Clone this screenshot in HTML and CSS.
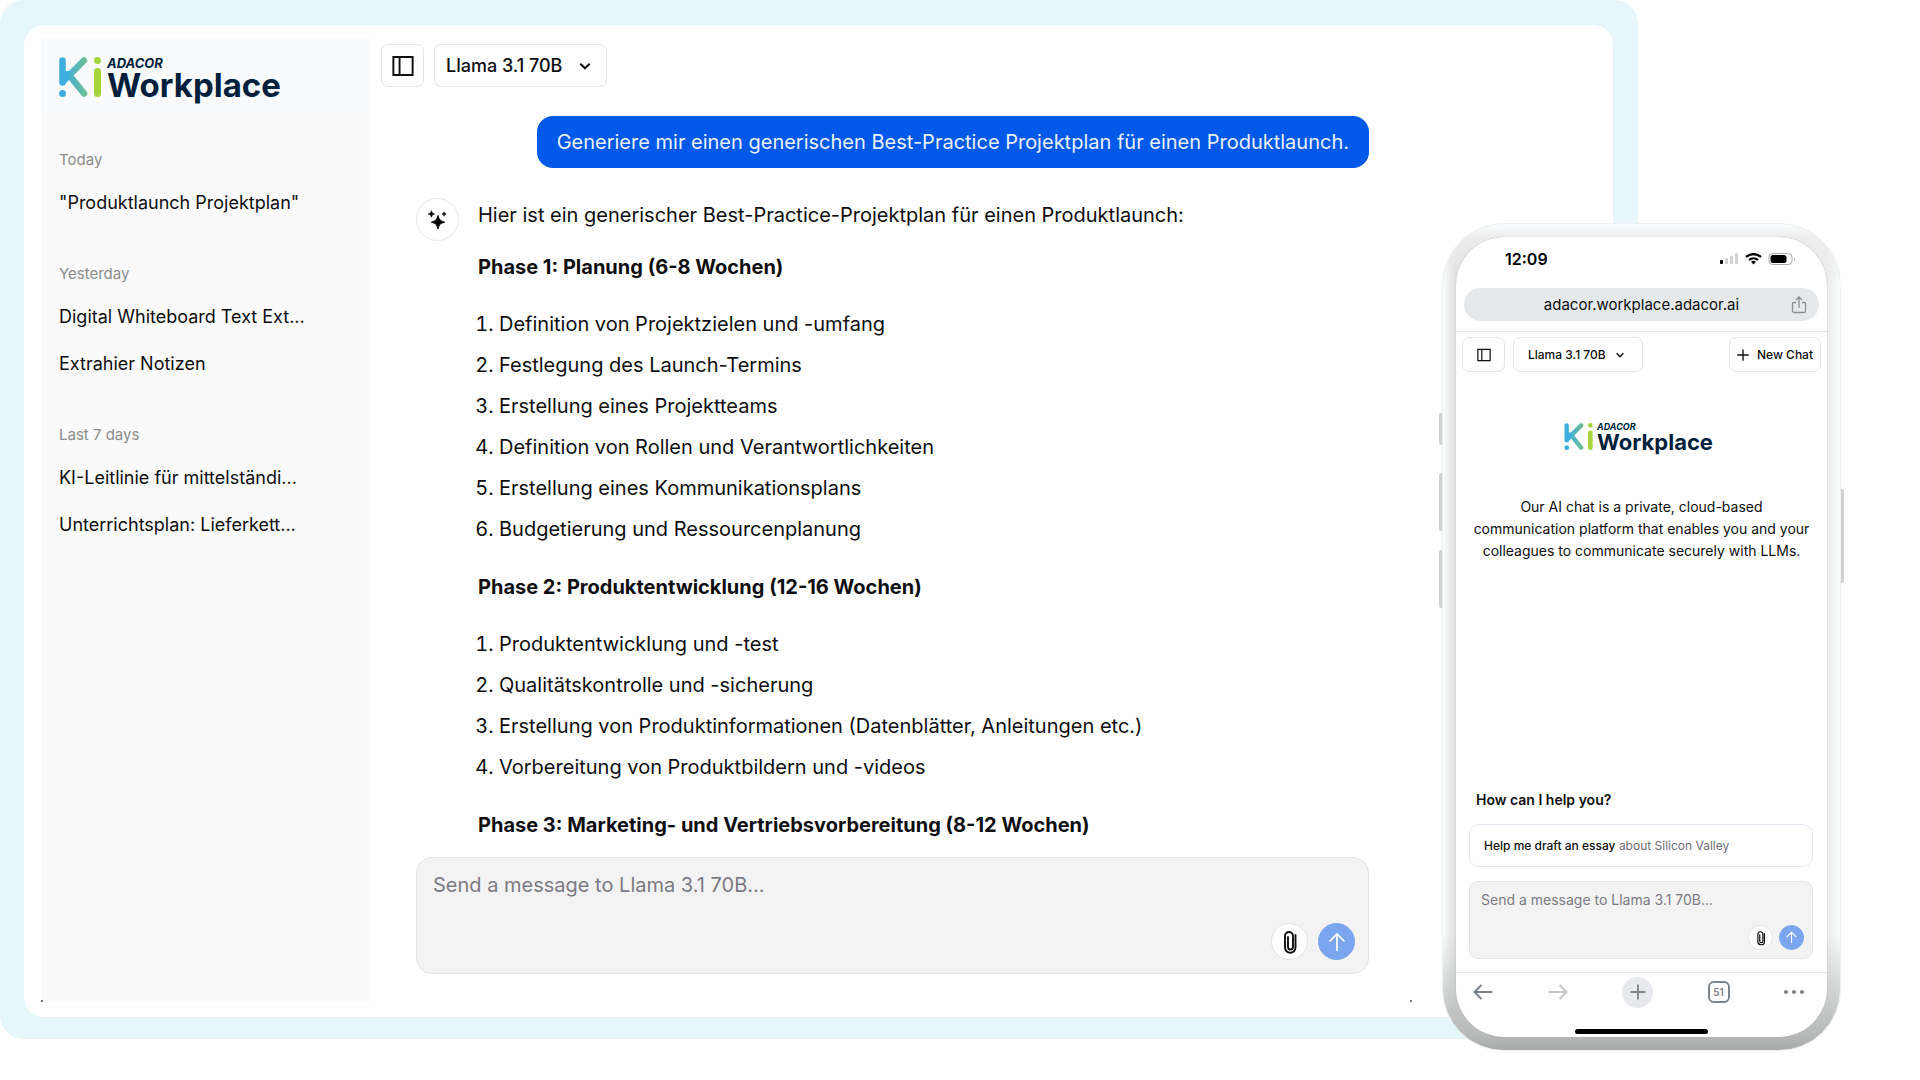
FILE: index.html
```html
<!DOCTYPE html>
<html lang="de">
<head>
    <meta charset="UTF-8">
    <meta name="viewport" content="width=device-width, initial-scale=1.0">
    <title>Adacor KI Workplace</title>
    <link rel="stylesheet" href="styles.css">
</head>
<body>
    <!-- shared icons -->
    <svg class="sprite" aria-hidden="true">
        <defs>
            <linearGradient id="kiBlue" gradientUnits="userSpaceOnUse" x1="0" y1="0" x2="30" y2="0">
                <stop offset="0.2" stop-color="#3eaee0"/>
                <stop offset="1" stop-color="#74c28a"/>
            </linearGradient>
        </defs>
        <symbol id="ki" viewBox="0 0 42 40">
            <g fill="none" stroke="url(#kiBlue)" stroke-width="6.500" stroke-linecap="round" stroke-linejoin="round">
                <path d="M3.500 3.500V25.500M3.500 25L25 3.500M11 19L25 36.500"/>
            </g>
            <path d="M3 14h7v8l-5 6h-2z" fill="#3eaee0"/>
            <circle cx="3.500" cy="36.500" r="3.500" fill="#3eaee0"/>
            <circle cx="38.500" cy="3.500" r="3.500" fill="#a5d43c"/>
            <rect x="35" y="11" width="7" height="29" rx="3.500" fill="#a5d43c"/>
        </symbol>
        <symbol id="panel" viewBox="0 0 16 16">
            <path d="M1 1.500h14v13H1zM5.500 1.500v13" fill="none" stroke="currentColor" stroke-width="1.400"/>
        </symbol>
        <symbol id="chevron" viewBox="0 0 12 12">
            <path d="M2 4l4 4 4-4" fill="none" stroke="currentColor" stroke-width="1.800"/>
        </symbol>
        <symbol id="sparkles" viewBox="0 0 20 20">
            <path d="M10 6c.9 4 2 5.100 6 6-4 .9-5.100 2-6 6-.9-4-2-5.100-6-6 4-.9 5.100-2 6-6z" stroke="currentColor" stroke-linejoin="round"/>
            <path d="M4 1.500c.5 2 1 2.500 3 3-2 .5-2.500 1-3 3-.5-2-1-2.500-3-3 2-.5 2.500-1 3-3zM15.500 2.500c.3 1.400.7 1.700 2 2-1.300.3-1.700.7-2 2-.3-1.300-.7-1.700-2-2 1.300-.3 1.700-.6 2-2z" stroke="currentColor" stroke-width="0.600"/>
        </symbol>
        <symbol id="clip" viewBox="0 0 16 24">
            <path d="M13.500 5v12.500a5 5 0 0 1-10.500 0V6a4 4 0 0 1 8 0v11a2.200 2.200 0 0 1-5 0V7" fill="none" stroke="currentColor" stroke-width="1.900" stroke-linecap="round"/>
        </symbol>
        <symbol id="arrow-up" viewBox="0 0 20 20">
            <path d="M10 19V2M2.500 9.500L10 2l7.500 7.500" fill="none" stroke="currentColor" stroke-width="1.700"/>
        </symbol>
        <symbol id="arrow" viewBox="0 0 20 16">
            <path d="M19.500 8H1.500M8.500 1L1.500 8l7 7" fill="none" stroke="currentColor" stroke-width="2"/>
        </symbol>
        <symbol id="plus" viewBox="0 0 16 16">
            <path d="M8 0.500v15M0.500 8h15" fill="none" stroke="currentColor" stroke-width="1.800"/>
        </symbol>
    </svg>

    <div class="stage">
        <div class="tablet">
            <div class="window">
                <aside class="sidebar">
                    <div class="logo">
                        <svg aria-hidden="true"><use href="#ki"/></svg>
                        <div><small>ADACOR</small><strong>Workplace</strong></div>
                    </div>
                    <nav>
                        <h2>Today</h2>
                        <a href="#">"Produktlaunch Projektplan"</a>
                        <h2>Yesterday</h2>
                        <a href="#">Digital Whiteboard Text Ext...</a>
                        <a href="#">Extrahier Notizen</a>
                        <h2>Last 7 days</h2>
                        <a href="#">KI-Leitlinie für mittelständi...</a>
                        <a href="#">Unterrichtsplan: Lieferkett...</a>
                    </nav>
                </aside>

                <main class="main">
                    <header class="topbar">
                        <button class="icon-button" aria-label="Toggle sidebar"><svg><use href="#panel"/></svg></button>
                        <div class="model">
                            <select aria-label="Model"><option>Llama 3.1 70B</option></select>
                            <svg><use href="#chevron"/></svg>
                        </div>
                    </header>

                    <div class="chat">
                        <p class="bubble">Generiere mir einen generischen Best-Practice Projektplan für einen Produktlaunch.</p>
                        <div class="reply">
                            <div class="avatar"><svg><use href="#sparkles"/></svg></div>
                            <div class="answer">
                                <p>Hier ist ein generischer Best-Practice-Projektplan für einen Produktlaunch:</p>
                                <h3>Phase 1: Planung (6-8 Wochen)</h3>
                                <ol>
                                    <li>Definition von Projektzielen und -umfang</li>
                                    <li>Festlegung des Launch-Termins</li>
                                    <li>Erstellung eines Projektteams</li>
                                    <li>Definition von Rollen und Verantwortlichkeiten</li>
                                    <li>Erstellung eines Kommunikationsplans</li>
                                    <li>Budgetierung und Ressourcenplanung</li>
                                </ol>
                                <h3>Phase 2: Produktentwicklung (12-16 Wochen)</h3>
                                <ol>
                                    <li>Produktentwicklung und -test</li>
                                    <li>Qualitätskontrolle und -sicherung</li>
                                    <li>Erstellung von Produktinformationen (Datenblätter, Anleitungen etc.)</li>
                                    <li>Vorbereitung von Produktbildern und -videos</li>
                                </ol>
                                <h3>Phase 3: Marketing- und Vertriebsvorbereitung (8-12 Wochen)</h3>
                            </div>
                        </div>
                        <form class="composer">
                            <textarea rows="1" aria-label="Message" placeholder="Send a message to Llama 3.1 70B..."></textarea>
                            <div class="actions">
                                <button type="button" class="attach" aria-label="Attach file"><svg><use href="#clip"/></svg></button>
                                <button type="button" class="send" aria-label="Send"><svg><use href="#arrow-up"/></svg></button>
                            </div>
                        </form>
                    </div>
                </main>
            </div>
        </div>

        <div class="phone">
            <div class="screen">
                <div class="status">
                    <span>12:09</span>
                    <svg viewBox="0 0 76 12" width="76" height="12">
                        <rect x="0" y="7" width="3" height="4" rx="1"/>
                        <g fill="#d2d2d4">
                            <rect x="5" y="5" width="3" height="6" rx="1"/>
                            <rect x="10" y="3" width="3" height="8" rx="1"/>
                            <rect x="15" y="0" width="3" height="11" rx="1"/>
                        </g>
                        <g fill="none" stroke="#000" stroke-width="2.200">
                            <path d="M26 4a11 11 0 0 1 15 0M29 7a7 7 0 0 1 9 0"/>
                        </g>
                        <path d="M33.500 11.500l-2.500-2.700a4 4 0 0 1 5 0z"/>
                        <rect x="49" y="0.500" width="23" height="11" rx="3.500" fill="#fff" stroke="#aaa"/>
                        <rect x="50.500" y="2" width="16" height="8" rx="2.500"/>
                        <path d="M74 4v4a2.500 2.500 0 0 0 0-4z" fill="#aaa"/>
                    </svg>
                </div>
                <div class="address">
                    <span>adacor.workplace.adacor.ai</span>
                    <button aria-label="Share">
                        <svg viewBox="0 0 16 18" width="16" height="18"><path d="M5 6.500H2.500a1 1 0 0 0-1 1V15a1.500 1.500 0 0 0 1.500 1.500h10a1.500 1.500 0 0 0 1.500-1.500V7.500a1 1 0 0 0-1-1H11M8 12V1.500M5 4l3-3 3 3" fill="none" stroke="#8a8f96" stroke-width="1.300"/></svg>
                    </button>
                </div>
                <div class="phone-bar">
                    <button class="icon-button" aria-label="Toggle sidebar"><svg><use href="#panel"/></svg></button>
                    <div class="model">
                        <select aria-label="Model"><option>Llama 3.1 70B</option></select>
                        <svg><use href="#chevron"/></svg>
                    </div>
                    <button class="new-chat"><svg><use href="#plus"/></svg>New Chat</button>
                </div>
                <div class="intro">
                    <div class="logo">
                        <svg aria-hidden="true"><use href="#ki"/></svg>
                        <div><small>ADACOR</small><strong>Workplace</strong></div>
                    </div>
                    <p>Our AI chat is a private, cloud-based<br>communication platform that enables you and your<br>colleagues to communicate securely with LLMs.</p>
                </div>
                <div class="ask">
                    <h2>How can I help you?</h2>
                    <button class="suggestion"><b>Help me draft an essay</b> about Silicon Valley</button>
                    <form class="composer">
                        <textarea rows="1" aria-label="Message" placeholder="Send a message to Llama 3.1 70B..."></textarea>
                        <div class="actions">
                            <button type="button" class="attach" aria-label="Attach file"><svg><use href="#clip"/></svg></button>
                            <button type="button" class="send" aria-label="Send"><svg><use href="#arrow-up"/></svg></button>
                        </div>
                    </form>
                </div>
                <div class="browser-nav">
                    <button aria-label="Back"><svg><use href="#arrow"/></svg></button>
                    <button class="forward" aria-label="Forward"><svg><use href="#arrow"/></svg></button>
                    <button class="new-tab" aria-label="New tab"><svg><use href="#plus"/></svg></button>
                    <button class="tabs" aria-label="Tabs">51</button>
                    <button aria-label="More"><svg viewBox="0 0 20 16" fill="currentColor"><circle cx="2" cy="8" r="2"/><circle cx="10" cy="8" r="2"/><circle cx="18" cy="8" r="2"/></svg></button>
                </div>
                <div class="home"></div>
            </div>
            <i class="key mute"></i>
            <i class="key volume-up"></i>
            <i class="key volume-down"></i>
            <i class="key power"></i>
        </div>
    </div>
</body>
</html>
```
FILE: styles.css
```css
* {
    box-sizing: border-box;
}
body {
    margin: 0;
    background: #fff;
    color: #0e0e10;
    font-family: Inter, "Liberation Sans", sans-serif;
    font-size: 20px;
}
h2, h3, p, ol {
    margin: 0;
    padding: 0;
}
button, select, textarea {
    margin: 0;
    padding: 0;
    border: 0;
    background: none;
    color: inherit;
    font: inherit;
}
svg {
    display: block;
    flex: none;
}
.sprite {
    position: absolute;
    width: 0;
    height: 0;
}
.stage {
    position: relative;
    padding: 0 282px 40px 0;
}

/* tablet */
.tablet {
    padding: 25px 25px 22px 24px;
    border-radius: 24px;
    background: #e6f6fa;
}
.window {
    position: relative;
    display: flex;
    padding: 13px 0 15px 17px;
    border-radius: 20px;
    background: #fff;
}
.window::before,
.window::after {
    content: "";
    position: absolute;
    bottom: 15px;
    left: 17px;
    width: 2px;
    height: 2px;
    background: #777;
}
.window::after {
    left: auto;
    right: 201px;
}
.sidebar {
    flex: none;
    width: 329px;
    padding: 19px 18px;
    background: linear-gradient(#f9fafc 76px, #fafafa 80px);
}
.logo {
    display: flex;
    gap: 6px;
    height: 48px;
    color: #001f3d;
}
.logo svg {
    width: 42px;
    height: 40px;
}
.logo small,
.logo strong {
    display: block;
    font-weight: 700;
}
.logo small {
    font-size: 13px;
    font-style: italic;
    line-height: 12px;
}
.logo strong {
    font-size: 33px;
    line-height: 32px;
}
.sidebar nav {
    margin-top: 36px;
}
.sidebar h2 {
    margin-top: 29px;
    color: #8c8c8c;
    font-size: 15px;
    font-weight: 400;
    line-height: 38px;
}
.sidebar nav a {
    display: block;
    color: #0e0e10;
    font-size: 18px;
    line-height: 47px;
    text-decoration: none;
    white-space: nowrap;
}
.main {
    flex: 1;
    min-width: 0;
    padding: 6px 244px 28px 11px;
}
.topbar {
    display: flex;
    gap: 10px;
}
.icon-button,
.model,
.new-chat {
    display: flex;
    align-items: center;
    justify-content: center;
    border: 1px solid #e5e5e7;
    border-radius: 7px;
    background: #fff;
}
.icon-button {
    width: 43px;
    height: 43px;
}
.icon-button svg {
    width: 22px;
    height: 22px;
}
.model {
    gap: 15px;
    height: 43px;
    padding: 0 14px 0 11px;
    font-size: 18px;
    font-weight: 500;
}
.model select {
    appearance: none;
}
.model svg {
    width: 14px;
    height: 14px;
}
.chat {
    display: flex;
    flex-direction: column;
    margin: 29px 0 0 35px;
}
.bubble {
    align-self: flex-end;
    padding: 0 20px;
    border-radius: 16px;
    background: #0059e8;
    color: #e9f0ff;
    line-height: 52px;
}
.reply {
    display: flex;
    gap: 19px;
    margin-top: 30px;
}
.avatar {
    display: flex;
    align-items: center;
    justify-content: center;
    flex: none;
    width: 43px;
    height: 43px;
    border: 1px solid #e4e8f0;
    border-radius: 50%;
}
.avatar svg {
    width: 22px;
    height: 22px;
}
.answer {
    line-height: 34px;
}
.answer h3 {
    margin: 20px 0;
    font-size: 20px;
    font-weight: 700;
}
.answer p + h3 {
    margin-top: 18px;
}
.answer h3:last-child {
    margin-bottom: 15px;
}
.answer ol {
    padding-left: 21px;
}
.answer li {
    line-height: 41px;
}
.composer {
    display: flex;
    flex-direction: column;
    justify-content: space-between;
    height: 117px;
    padding: 11px 13px 13px 16px;
    border: 1px solid #e4e4e7;
    border-radius: 16px;
    background: #f3f3f3;
}
.composer textarea {
    height: 32px;
    line-height: 32px;
    overflow: hidden;
    resize: none;
}
.composer textarea::placeholder {
    color: #7b7b83;
}
.actions {
    display: flex;
    justify-content: flex-end;
    gap: 10px;
}
.actions button {
    display: flex;
    align-items: center;
    justify-content: center;
    width: 37px;
    height: 37px;
    border: 1px solid #e4e4e7;
    border-radius: 50%;
    background: #fff;
}
.actions .send {
    border-color: #7ba5ee;
    background: #7ba5ee;
    color: #fff;
}
.attach svg {
    width: 16px;
    height: 24px;
}
.send svg {
    width: 20px;
    height: 20px;
}

/* phone lies over the tablet's corner */
.phone {
    position: absolute;
    top: 223px;
    right: 79px;
    width: 399px;
    aspect-ratio: 399 / 828;
    padding: 13px;
    border: 1px solid #eef1f1;
    border-radius: 62px;
    background:
        linear-gradient(#f9fdfe, #ededed 13px, transparent 60px),
        linear-gradient(transparent 86%, #b9baba 98%, #a8a9a9),
        linear-gradient(90deg, #fafdfd, #dedede 13px, #ebebeb 384px, #fafefe);
}
.screen {
    display: flex;
    flex-direction: column;
    height: 100%;
    overflow: hidden;
    border-radius: 48px;
    background: #fff;
    box-shadow: 0 0 1px #999;
}
.status {
    display: flex;
    justify-content: space-between;
    align-items: center;
    height: 44px;
    padding: 0 31px 0 49px;
    color: #000;
    font-size: 16px;
    font-weight: 600;
}
.address {
    display: flex;
    align-items: center;
    height: 33px;
    margin: 7px 8px 10px;
    padding: 0 12px 0 28px;
    border-radius: 17px;
    background: #e6e9ec;
    font-size: 15px;
}
.address span {
    flex: 1;
    text-align: center;
}
.phone-bar {
    display: flex;
    gap: 8px;
    padding: 5px 6px;
    border-top: 1px solid #e5e5e7;
}
.phone-bar .icon-button {
    height: 35px;
}
.phone-bar .icon-button svg {
    width: 16px;
    height: 14px;
}
.phone-bar .model {
    width: 130px;
    height: 35px;
    gap: 9px;
    font-size: 12px;
}
.phone-bar .model svg {
    width: 10px;
    height: 10px;
}
.new-chat {
    gap: 8px;
    margin-left: auto;
    padding: 0 7px;
    font-size: 12px;
    font-weight: 500;
}
.new-chat svg {
    width: 12px;
    height: 12px;
}
.intro {
    display: flex;
    flex: 1;
    flex-direction: column;
    align-items: center;
    padding-top: 46px;
    font-size: 14px;
    line-height: 22px;
    text-align: center;
    white-space: nowrap;
}
.intro .logo {
    gap: 4px;
    height: 33px;
    margin-bottom: 40px;
    padding-right: 6px;
    text-align: left;
}
.intro .logo svg {
    width: 29px;
    height: 27px;
}
.intro .logo small {
    font-size: 9px;
    line-height: 8px;
}
.intro .logo strong {
    font-size: 22px;
    line-height: 22px;
}
.ask {
    display: flex;
    flex-direction: column;
    padding: 0 14px 13px 13px;
}
.ask h2 {
    margin-bottom: 14px;
    padding-left: 7px;
    font-size: 14px;
    font-weight: 600;
    line-height: 20px;
}
.suggestion {
    height: 43px;
    margin-bottom: 14px;
    padding: 0 14px;
    border: 1px solid #e4e8f2;
    border-radius: 10px;
    color: #6f6f77;
    font-size: 12px;
    text-align: left;
}
.suggestion b {
    color: #0e0e10;
    font-weight: 500;
}
.ask .composer {
    height: 78px;
    padding: 8px 8px 8px 11px;
    border-radius: 9px;
    font-size: 14px;
}
.ask .composer textarea {
    height: 20px;
    line-height: 20px;
}
.ask .actions {
    gap: 6px;
}
.ask .actions button {
    width: 25px;
    height: 25px;
}
.ask .attach svg {
    width: 10px;
    height: 16px;
}
.ask .send svg {
    width: 13px;
    height: 13px;
}
.browser-nav {
    display: flex;
    justify-content: space-between;
    align-items: center;
    height: 39px;
    padding: 0 23px 0 17px;
    border-top: 1px solid #e5e5e7;
    color: #7c838a;
}
.browser-nav svg {
    width: 20px;
    height: 16px;
}
.browser-nav .forward {
    color: #c3c5c8;
    transform: scaleX(-1);
}
.browser-nav .new-tab {
    display: flex;
    align-items: center;
    justify-content: center;
    width: 31px;
    height: 31px;
    border-radius: 50%;
    background: #e8e9ed;
}
.browser-nav .tabs {
    width: 22px;
    height: 22px;
    border: 2px solid #7c838a;
    border-radius: 6px;
    font-size: 10px;
    font-weight: 600;
}
.home {
    width: 133px;
    height: 5px;
    margin: 18px auto 3px;
    border-radius: 3px;
    background: #000;
}
.key {
    position: absolute;
    left: -4px;
    width: 3px;
    border-radius: 2px 0 0 2px;
    background: #d0d1d1;
}
.mute {
    top: 189px;
    height: 32px;
}
.volume-up {
    top: 249px;
    height: 58px;
}
.volume-down {
    top: 326px;
    height: 58px;
}
.power {
    top: 265px;
    right: -4px;
    left: auto;
    height: 94px;
    border-radius: 0 2px 2px 0;
}
```
